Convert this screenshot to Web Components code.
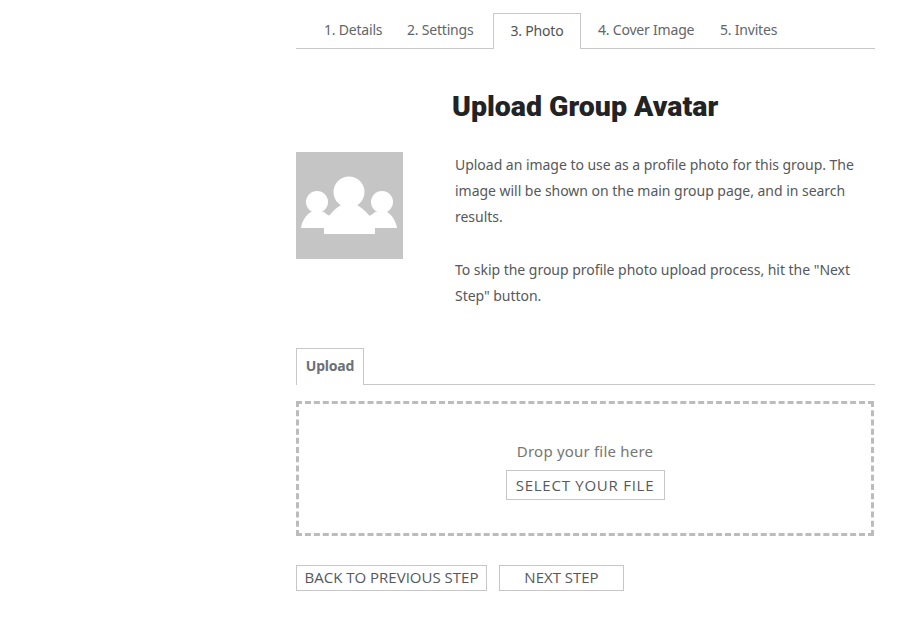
<!DOCTYPE html>
<html>
<head>
<meta charset="utf-8">
<title>Upload Group Avatar</title>
<style>
  html, body { margin: 0; background: #fff; }
  body { font-family: "Noto Sans", sans-serif; color: #4f5257; }
</style>
</head>
<body>
<step-page>
  <step-tabs slot="tabs">
    <step-tab style="margin-left:28px;width:58px">1. Details</step-tab>
    <step-tab style="margin-left:25px;width:69px">2. Settings</step-tab>
    <step-tab active style="margin-left:17px;width:88px">3. Photo</step-tab>
    <step-tab style="margin-left:17px;width:97px">4. Cover Image</step-tab>
    <step-tab style="margin-left:25px;width:58px">5. Invites</step-tab>
  </step-tabs>
  <avatar-intro>
    <span slot="title">Upload Group Avatar</span>
    <p>Upload an image to use as a profile photo for this group. The image will be shown on the main group page, and in search results.</p>
    <p>To skip the group profile photo upload process, hit the "Next Step" button.</p>
  </avatar-intro>
  <upload-box></upload-box>
  <div style="display:flex;gap:12px;margin-top:29px">
    <plain-button style="width:191px">BACK TO PREVIOUS STEP</plain-button>
    <plain-button style="width:125px">NEXT STEP</plain-button>
  </div>
</step-page>

<template id="step-page-tmpl">
  <style>
    :host { display: block; box-sizing: border-box; width: 579px; margin-left: 296px; padding-top: 13px; }
  </style>
  <slot name="tabs"></slot>
  <slot></slot>
</template>

<template id="step-tabs-tmpl">
  <style>
    :host { display: flex; height: 35px; border-bottom: 1px solid #c8c8c8; }
  </style>
  <slot></slot>
</template>

<template id="step-tab-tmpl">
  <style>
    :host { display: block; flex: none; font: 14px/34px "Noto Sans", sans-serif; letter-spacing: -0.2px; color: #62656a; white-space: nowrap; }
    :host([active]) {
      box-sizing: border-box; height: 36px; text-align: center; color: #4f5257;
      background: #fff; border: 1px solid #c8c8c8; border-bottom: 0;
    }
  </style>
  <slot></slot>
</template>

<template id="avatar-intro-tmpl">
  <style>
    :host { display: block; }
    h1 {
      margin: 39px 0 0 156px; font: 900 28.5px/38px Roboto, sans-serif; color: #222325;
    }
    .row { display: flex; margin-top: 26px; }
    svg { flex: none; width: 107px; height: 107px; display: block; }
    .copy { margin-left: 52px; width: 420px; font: 14px/26px "Noto Sans", sans-serif; letter-spacing: -0.03px; color: #55585c; }
    ::slotted(p) { margin: 0 0 27px; }
    ::slotted(p:last-child) { margin-bottom: 0; }
  </style>
  <h1><slot name="title"></slot></h1>
  <div class="row">
    <svg viewBox="0 0 107 107">
      <rect width="107" height="107" fill="#c5c5c5"/>
      <g fill="#fff">
        <circle cx="21" cy="50" r="11"/>
        <path d="M5 76 C6 69 10 63 15 60 L28 60 C30 62 32 63 34 64 V76 Z"/>
        <circle cx="86" cy="50" r="11"/>
        <path d="M101 76 C100 69 96 63 91 60 L79 60 C77 62 75 63 73 64 V76 Z"/>
        <circle cx="53" cy="40" r="15.500"/>
        <path d="M28 82 V73 C30 66 38 57 45 53 L61 53 C68 57 77 66 79 73 V82 Z"/>
      </g>
    </svg>
    <div class="copy"><slot></slot></div>
  </div>
</template>

<template id="upload-box-tmpl">
  <style>
    :host { display: block; margin-top: 39px; }
    .tabs { height: 36px; border-bottom: 1px solid #c8c8c8; display: flex; }
    .tab {
      box-sizing: border-box; width: 68px; height: 37px; border: 1px solid #c8c8c8; border-bottom: 0; background: #fff;
      font: 700 14px/33px "Noto Sans", sans-serif; letter-spacing: -0.2px; color: #6d7076; text-align: center;
    }
    .drop {
      box-sizing: border-box; width: 578px; height: 135px; margin-top: 16px; border: 3px dashed #bcbcbc;
      display: flex; flex-direction: column; align-items: center; padding-top: 34px;
    }
    .label { font: 15px/26px "Noto Sans", sans-serif; letter-spacing: 0.2px; color: #767676; margin-bottom: 6px; }
  </style>
  <div class="tabs"><div class="tab">Upload</div></div>
  <div class="drop">
    <div class="label">Drop your file here</div>
    <plain-button tall style="width:159px">SELECT YOUR FILE</plain-button>
  </div>
</template>

<template id="plain-button-tmpl">
  <style>
    :host {
      display: block; box-sizing: border-box; height: 26px; border: 1px solid #c6c6c6; background: #fff;
      font: 15px/23px "Open Sans", sans-serif; color: #55585c; text-align: center; white-space: nowrap;
    }
    :host([tall]) { height: 30px; line-height: 28px; letter-spacing: 0.75px; }
  </style>
  <slot></slot>
</template>

<script>
  // each element just clones its own template into an open shadow root
  function define(name) {
    const tmpl = document.getElementById(name + "-tmpl");
    customElements.define(name, class extends HTMLElement {
      constructor() {
        super();
        this.attachShadow({ mode: "open" }).appendChild(tmpl.content.cloneNode(true));
      }
    });
  }
  ["step-page", "step-tabs", "step-tab", "avatar-intro", "upload-box", "plain-button"].forEach(define);
</script>
</body>
</html>
